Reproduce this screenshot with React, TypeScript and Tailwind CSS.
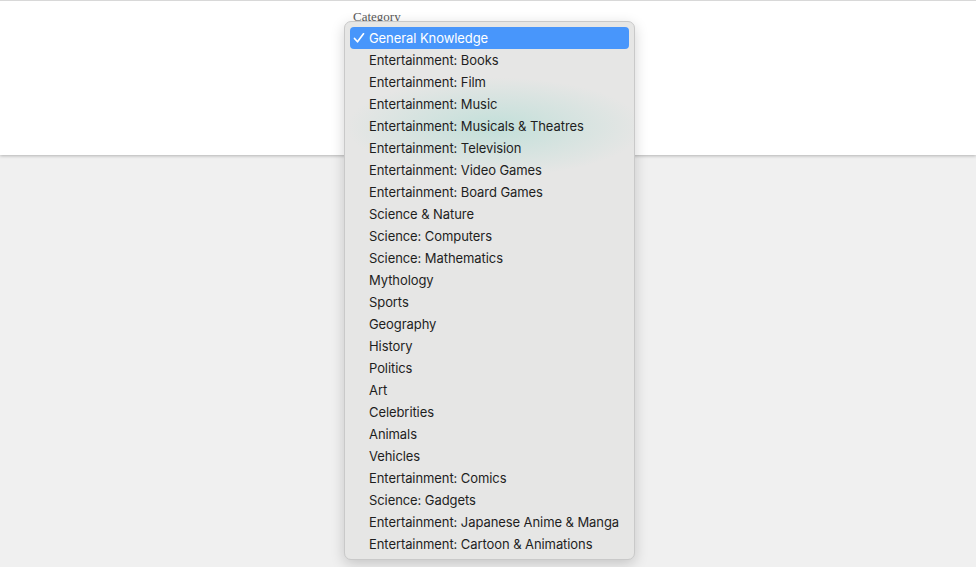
import React from "react";

const items = [
  "General Knowledge",
  "Entertainment: Books",
  "Entertainment: Film",
  "Entertainment: Music",
  "Entertainment: Musicals & Theatres",
  "Entertainment: Television",
  "Entertainment: Video Games",
  "Entertainment: Board Games",
  "Science & Nature",
  "Science: Computers",
  "Science: Mathematics",
  "Mythology",
  "Sports",
  "Geography",
  "History",
  "Politics",
  "Art",
  "Celebrities",
  "Animals",
  "Vehicles",
  "Entertainment: Comics",
  "Science: Gadgets",
  "Entertainment: Japanese Anime & Manga",
  "Entertainment: Cartoon & Animations",
];

export default function App() {
  return (
    <div className="relative w-full h-[567px] bg-[#f0f0f0] overflow-hidden">
      <div className="h-[155px] bg-white border-t border-[#d8d8d8] shadow-[0_1px_3px_rgba(0,0,0,0.25)] relative z-10">
        <div className="pl-[353px] pt-[8px] text-[13px] leading-[15px] text-[#5a5a5a] [font-family:'Liberation_Serif',serif]">
          Category
        </div>
      </div>
      <div className="absolute left-[344px] top-[21px] w-[291px] h-[539px] z-20 rounded-[7px] border border-[#c9c9c9] bg-[#e6e6e5] shadow-[0_4px_14px_rgba(0,0,0,0.18)] overflow-hidden px-[5px] pt-[5px] [font-family:Inter,'Noto_Sans',sans-serif]">
        <div className="absolute left-[0px] top-[55px] w-[300px] h-[100px] bg-[radial-gradient(ellipse_at_center,rgba(165,218,208,0.55),rgba(165,218,208,0)_70%)] pointer-events-none" />
        <div className="relative flex flex-col">
          {items.map((it, i) => (
            <div
              key={it}
              className={
                i === 0
                  ? "h-[22px] flex items-center rounded-[4px] bg-[#4896fb] text-white"
                  : "h-[22px] flex items-center text-[#1e1e1e]"
              }
            >
              <span className="w-[19px] pl-[3px] flex items-center">
                {i === 0 ? (
                  <svg width="12" height="12" viewBox="0 0 12 12" fill="none">
                    <path d="M1.5 6.5 L4.5 9.8 L10.5 1.8" stroke="white" strokeWidth="1.7" strokeLinecap="round" strokeLinejoin="round" />
                  </svg>
                ) : null}
              </span>
              <span className="text-[13px] leading-none tracking-[-0.08px] font-normal">{it}</span>
            </div>
          ))}
        </div>
      </div>
    </div>
  );
}
